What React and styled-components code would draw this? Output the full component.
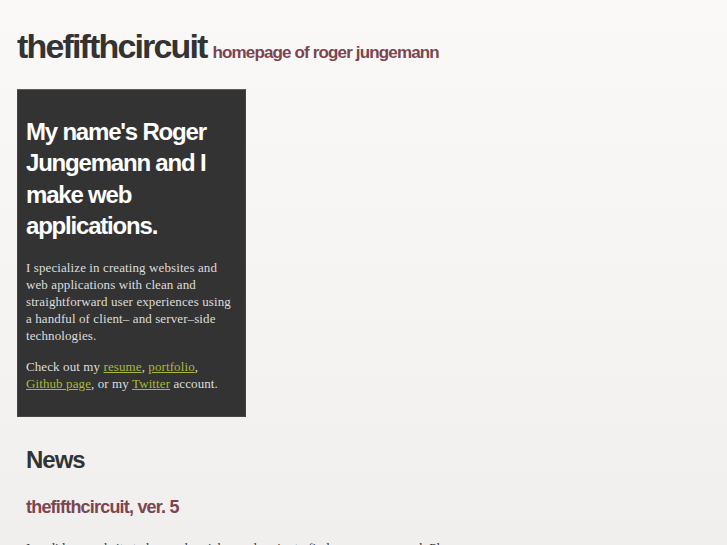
import React from 'react';
import styled, { createGlobalStyle } from 'styled-components';

const GlobalStyle = createGlobalStyle`
  html, body {
    margin: 0;
    padding: 0;
  }
  body {
    min-height: 100vh;
    background: linear-gradient(to bottom, #faf9f8 0%, #f4f3f2 60%, #efeeed 100%);
    font-family: "Liberation Serif", "Times New Roman", serif;
    color: #333;
  }
`;

const Page = styled.div`
  padding: 26px 17px 0;
`;

const Header = styled.header`
  display: flex;
  align-items: baseline;
  gap: 6px;
  margin-bottom: 23px;
`;

const Logo = styled.h1`
  margin: 0;
  font-family: "Liberation Sans", Arial, sans-serif;
  font-size: 34px;
  font-weight: bold;
  letter-spacing: -1.85px;
  color: #333;
  line-height: 40px;
`;

const Tagline = styled.span`
  font-family: "Liberation Sans", Arial, sans-serif;
  font-size: 17px;
  font-weight: bold;
  letter-spacing: -0.85px;
  color: #7b4650;
`;

const Intro = styled.section`
  width: 206px;
  padding: 9px 13px 10px 8px;
  background: #333;
  border: 1px solid #444;
  border-top-color: #5c5c5c;
`;

const IntroTitle = styled.h2`
  margin: 17px 0 18px;
  font-family: "Liberation Sans", Arial, sans-serif;
  font-size: 24px;
  line-height: 31.3px;
  font-weight: bold;
  letter-spacing: -1.2px;
  color: #fff;
`;

const Text = styled.p`
  margin: 0 0 14px;
  font-size: 13px;
  line-height: 17px;
  letter-spacing: 0.1px;
  color: ${(p) => (p.$light ? '#ddd' : '#333')};
`;

const Link = styled.a`
  color: #a9b83c;
  text-decoration: underline;
`;

const Main = styled.main`
  width: 452px;
  padding: 0 9px;
`;

const SectionTitle = styled.h2`
  margin: 27px 0 20px;
  font-family: "Liberation Sans", Arial, sans-serif;
  font-size: 24px;
  line-height: 31px;
  font-weight: bold;
  letter-spacing: -1px;
  color: #333;
`;

const PostTitle = styled.h3`
  margin: 0 0 20px;
  font-family: "Liberation Sans", Arial, sans-serif;
  font-size: 18px;
  line-height: 24px;
  font-weight: bold;
  letter-spacing: -0.8px;
  color: #7b4650;
`;

export default function App() {
  return (
    <>
      <GlobalStyle />
      <Page>
        <Header>
          <Logo>thefifthcircuit</Logo>
          <Tagline>homepage of roger jungemann</Tagline>
        </Header>
        <Intro>
          <IntroTitle>My name's Roger Jungemann and I make web applications.</IntroTitle>
          <Text $light>
            I specialize in creating websites and web applications with clean and
            straightforward user experiences using a handful of client– and server–side
            technologies.
          </Text>
          <Text $light>
            Check out my <Link href="#">resume</Link>, <Link href="#">portfolio</Link>,{' '}
            <Link href="#">Github page</Link>, or my <Link href="#">Twitter</Link> account.
          </Text>
        </Intro>
        <Main>
          <SectionTitle>News</SectionTitle>
          <PostTitle>thefifthcircuit, ver. 5</PostTitle>
          <Text>
            I re-did my website to be much quicker and easier to find your way around. Please
            take a look around and let me know what you think.
          </Text>
        </Main>
      </Page>
    </>
  );
}
